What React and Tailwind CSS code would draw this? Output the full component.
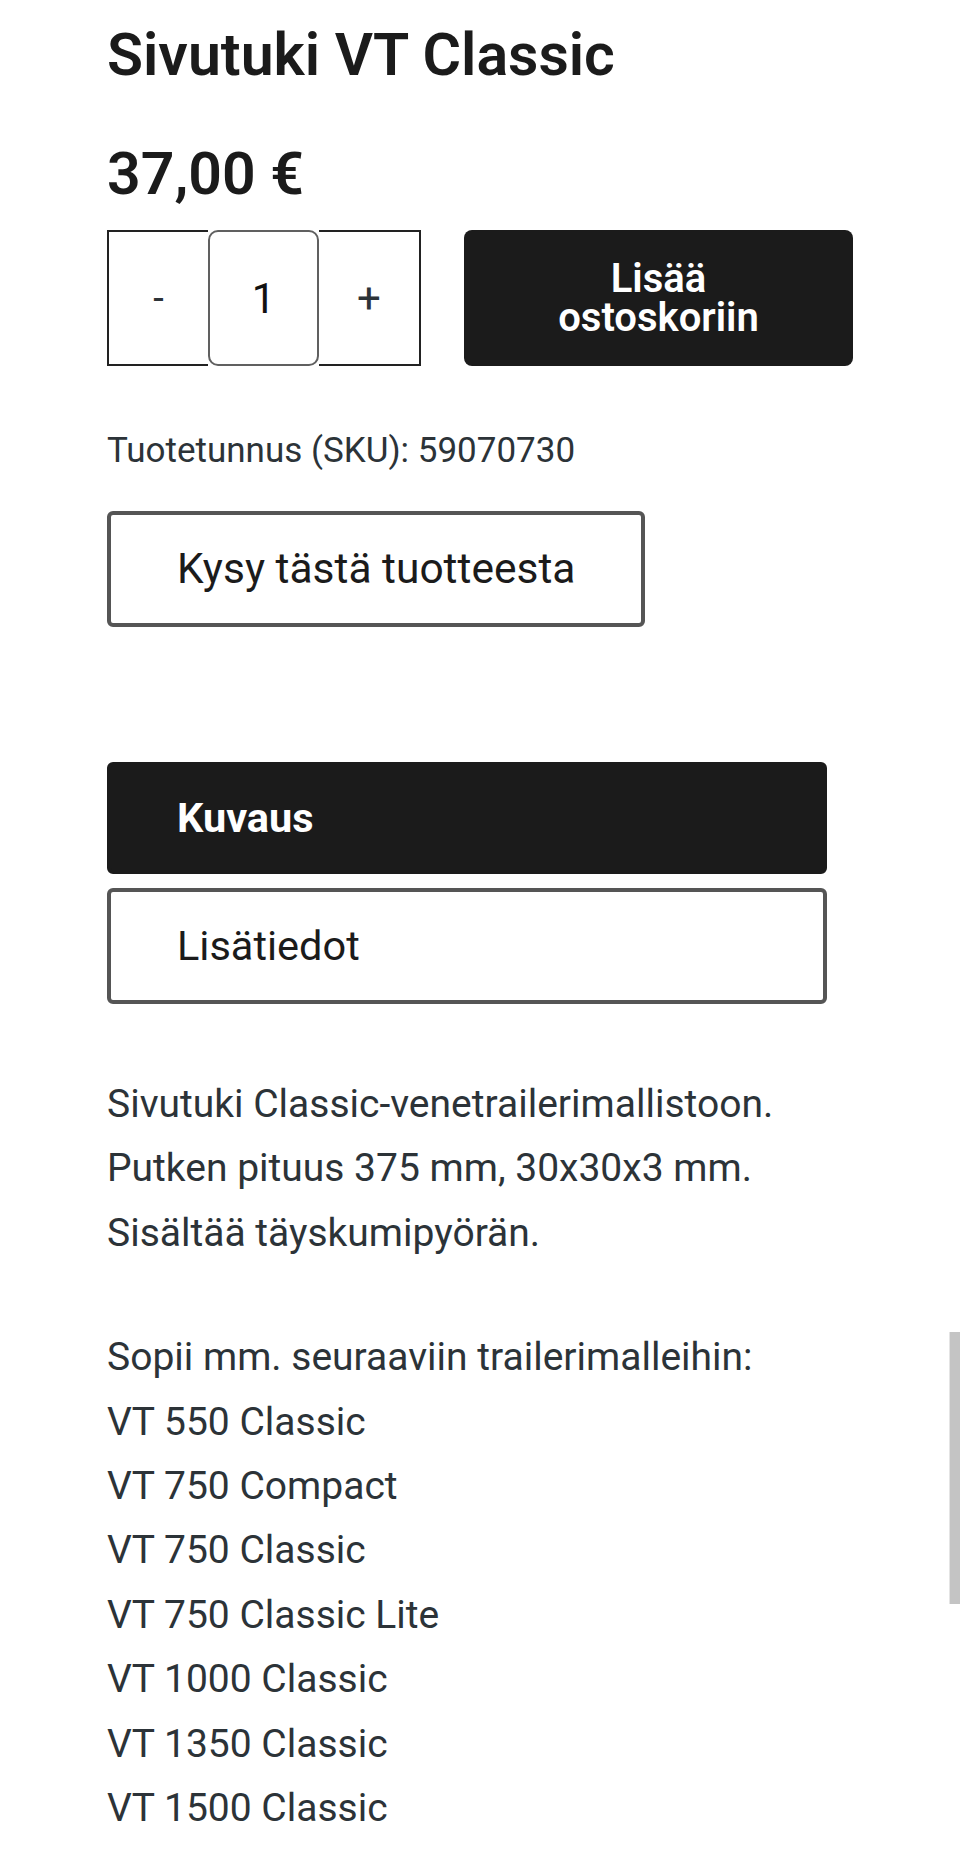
import { useState } from 'react';

const models = [
    'VT 550 Classic',
    'VT 750 Compact',
    'VT 750 Classic',
    'VT 750 Classic Lite',
    'VT 1000 Classic',
    'VT 1350 Classic',
    'VT 1500 Classic',
];

const QuantityPicker = () => {
    const [qty, setQty] = useState(1);

    return (
        <div className="flex h-[136px]">
            <button
                onClick={() => setQty((q) => Math.max(1, q - 1))}
                className="flex w-[101px] items-center justify-center border-y-2 border-l-2 border-[#222] bg-white text-[38px] text-[#2c3338]"
            >
                -
            </button>
            <div className="flex w-[111px] items-center justify-center rounded-[10px] border-2 border-[#606060] bg-white text-[42px] text-[#111]">
                {qty}
            </div>
            <button
                onClick={() => setQty((q) => q + 1)}
                className="flex w-[102px] items-center justify-center border-y-2 border-r-2 border-[#222] bg-white text-[42px] text-[#2c3338]"
            >
                +
            </button>
        </div>
    );
};

const App = () => {
    const [tab, setTab] = useState('kuvaus');

    return (
        <div className="relative min-h-[1862px] overflow-hidden bg-white font-['Roboto','Liberation_Sans',sans-serif]">
            <div className="px-[107px] pt-[23px]">
                <h1 className="text-[59px] font-semibold leading-[64px] text-[#1b1b1b]">Sivutuki VT Classic</h1>
                <p className="mt-[55px] text-[59px] font-semibold leading-[64px] text-[#1b1b1b]">37,00 €</p>

                <div className="mt-[24px] flex gap-[43px]">
                    <QuantityPicker />
                    <button className="flex h-[136px] w-[389px] flex-col items-center justify-center rounded-[8px] bg-[#1b1b1b] text-center text-[40px] font-semibold leading-[39px] text-white">
                        <span>Lisää</span>
                        <span>ostoskoriin</span>
                    </button>
                </div>

                <p className="mt-[61px] text-[35px] leading-[48px] text-[#2c3338]">Tuotetunnus (SKU): 59070730</p>

                <button className="mt-[36px] flex h-[116px] items-center rounded-[6px] border-4 border-[#555] px-[66px] text-[42.5px] text-[#1b1b1b]">
                    Kysy tästä tuotteesta
                </button>

                <div className="mt-[135px] flex w-[720px] flex-col gap-[14px]">
                    <button
                        onClick={() => setTab('kuvaus')}
                        className={
                            tab === 'kuvaus'
                                ? 'flex h-[112px] items-center rounded-[6px] border-4 border-[#1b1b1b] bg-[#1b1b1b] px-[66px] text-[41.5px] font-bold text-white'
                                : 'flex h-[112px] items-center rounded-[6px] border-4 border-[#555] bg-white px-[66px] text-[41.5px] text-[#1b1b1b]'
                        }
                    >
                        Kuvaus
                    </button>
                    <button
                        onClick={() => setTab('lisatiedot')}
                        className={
                            tab === 'lisatiedot'
                                ? 'flex h-[116px] items-center rounded-[6px] border-4 border-[#1b1b1b] bg-[#1b1b1b] px-[66px] text-[41.5px] font-bold text-white'
                                : 'flex h-[116px] items-center rounded-[6px] border-4 border-[#555] bg-white px-[66px] text-[41.5px] text-[#1b1b1b]'
                        }
                    >
                        Lisätiedot
                    </button>
                </div>

                <div className="mt-[68px] text-[39px] leading-[64.4px] text-[#2c3338]">
                    <p className="mb-[60px]">
                        Sivutuki Classic-venetrailerimallistoon.
                        <br />
                        Putken pituus 375 mm, 30x30x3 mm.
                        <br />
                        Sisältää täyskumipyörän.
                    </p>
                    <p>Sopii mm. seuraaviin trailerimalleihin:</p>
                    {models.map((m) => (
                        <p key={m}>{m}</p>
                    ))}
                </div>
            </div>

            {/* scrollbar thumb */}
            <div className="absolute right-0 top-[1332px] h-[272px] w-[11px] border-l border-[#e4e4e4] bg-[#c4c4c4]"></div>
        </div>
    );
};

export default App;
